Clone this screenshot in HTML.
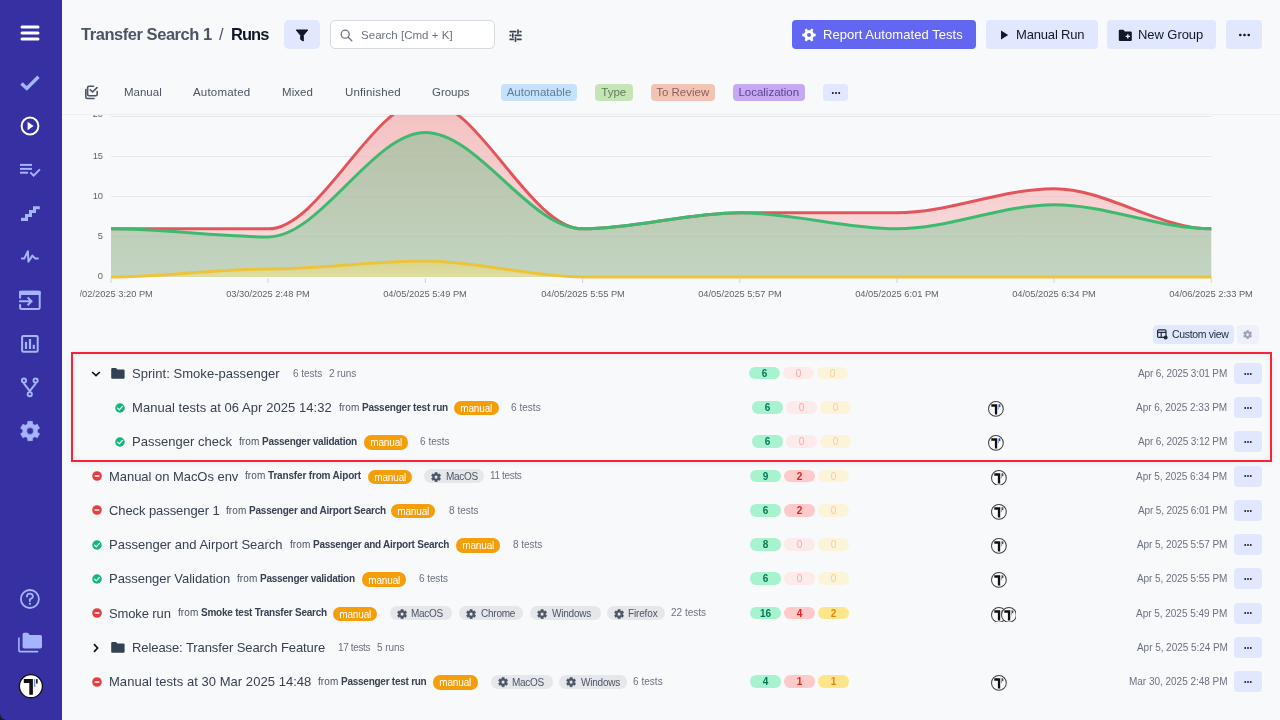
<!DOCTYPE html>
<html><head><meta charset="utf-8"><style>
html,body{margin:0;padding:0;}
body{width:1280px;height:720px;overflow:hidden;position:relative;background:#f8f9fb;font-family:"Liberation Sans", sans-serif;}
div[id^=t]{will-change:transform;}
.cl{will-change:transform;position:absolute;font-size:9.3px;line-height:14px;height:14px;color:#5f6368;white-space:nowrap;}
</style></head><body>
<div style="position:absolute;left:80px;top:0;width:1200px;height:320px;overflow:hidden">
<div style="position:absolute;left:-80px;top:0;width:1280px;height:320px">
<svg width="1280" height="720" style="position:absolute;left:0;top:0">
<defs>
<linearGradient id="gr" x1="0" y1="100" x2="0" y2="277.0" gradientUnits="userSpaceOnUse"><stop offset="0" stop-color="#ef4444" stop-opacity="0.32"/><stop offset="1" stop-color="#ef4444" stop-opacity="0.14"/></linearGradient>
<linearGradient id="gg" x1="0" y1="100" x2="0" y2="277.0" gradientUnits="userSpaceOnUse"><stop offset="0" stop-color="#3dba6f" stop-opacity="0.35"/><stop offset="1" stop-color="#3dba6f" stop-opacity="0.28"/></linearGradient>
<linearGradient id="gy" x1="0" y1="258" x2="0" y2="277.0" gradientUnits="userSpaceOnUse"><stop offset="0" stop-color="#f5d750" stop-opacity="0.42"/><stop offset="1" stop-color="#f5e68c" stop-opacity="0.55"/></linearGradient>
</defs>
<line x1="111.0" y1="276.5" x2="1211.26" y2="276.5" stroke="#e5e7eb" stroke-width="1"/><line x1="111.0" y1="236.5" x2="1211.26" y2="236.5" stroke="#e5e7eb" stroke-width="1"/><line x1="111.0" y1="196.5" x2="1211.26" y2="196.5" stroke="#e5e7eb" stroke-width="1"/><line x1="111.0" y1="156.5" x2="1211.26" y2="156.5" stroke="#e5e7eb" stroke-width="1"/><line x1="111.0" y1="116.5" x2="1211.26" y2="116.5" stroke="#e5e7eb" stroke-width="1"/><path d="M111.00,228.85 C163.39,228.85 215.79,228.85 268.18,228.85 C320.57,228.85 372.97,100.45 425.36,100.45 C477.75,100.45 530.15,228.85 582.54,228.85 C634.93,228.85 687.33,212.80 739.72,212.80 C792.11,212.80 844.51,212.80 896.90,212.80 C949.29,212.80 1001.69,188.72 1054.08,188.72 C1106.47,188.72 1158.87,228.85 1211.26,228.85 L1211.26,277.0 L111.0,277.0 Z" fill="#f8f9fb" fill-opacity="0.6"/><path d="M111.00,228.85 C163.39,228.85 215.79,228.85 268.18,228.85 C320.57,228.85 372.97,100.45 425.36,100.45 C477.75,100.45 530.15,228.85 582.54,228.85 C634.93,228.85 687.33,212.80 739.72,212.80 C792.11,212.80 844.51,212.80 896.90,212.80 C949.29,212.80 1001.69,188.72 1054.08,188.72 C1106.47,188.72 1158.87,228.85 1211.26,228.85 L1211.26,277.0 L111.0,277.0 Z" fill="url(#gr)"/><path d="M111.00,228.85 C163.39,228.85 215.79,236.88 268.18,236.88 C320.57,236.88 372.97,132.55 425.36,132.55 C477.75,132.55 530.15,228.85 582.54,228.85 C634.93,228.85 687.33,212.80 739.72,212.80 C792.11,212.80 844.51,228.85 896.90,228.85 C949.29,228.85 1001.69,204.77 1054.08,204.77 C1106.47,204.77 1158.87,228.85 1211.26,228.85 L1211.26,277.0 L111.0,277.0 Z" fill="url(#gg)"/><path d="M111.00,277.00 C163.39,277.00 215.79,268.98 268.18,268.98 C320.57,268.98 372.97,260.95 425.36,260.95 C477.75,260.95 530.15,277.00 582.54,277.00 C634.93,277.00 687.33,277.00 739.72,277.00 C792.11,277.00 844.51,277.00 896.90,277.00 C949.29,277.00 1001.69,277.00 1054.08,277.00 C1106.47,277.00 1158.87,277.00 1211.26,277.00 L1211.26,277.0 L111.0,277.0 Z" fill="url(#gy)"/><path d="M111.00,228.85 C163.39,228.85 215.79,228.85 268.18,228.85 C320.57,228.85 372.97,100.45 425.36,100.45 C477.75,100.45 530.15,228.85 582.54,228.85 C634.93,228.85 687.33,212.80 739.72,212.80 C792.11,212.80 844.51,212.80 896.90,212.80 C949.29,212.80 1001.69,188.72 1054.08,188.72 C1106.47,188.72 1158.87,228.85 1211.26,228.85" fill="none" stroke="#e3555a" stroke-width="3"/><path d="M111.00,228.85 C163.39,228.85 215.79,236.88 268.18,236.88 C320.57,236.88 372.97,132.55 425.36,132.55 C477.75,132.55 530.15,228.85 582.54,228.85 C634.93,228.85 687.33,212.80 739.72,212.80 C792.11,212.80 844.51,228.85 896.90,228.85 C949.29,228.85 1001.69,204.77 1054.08,204.77 C1106.47,204.77 1158.87,228.85 1211.26,228.85" fill="none" stroke="#3dba6f" stroke-width="3"/><path d="M111.00,277.00 C163.39,277.00 215.79,268.98 268.18,268.98 C320.57,268.98 372.97,260.95 425.36,260.95 C477.75,260.95 530.15,277.00 582.54,277.00 C634.93,277.00 687.33,277.00 739.72,277.00 C792.11,277.00 844.51,277.00 896.90,277.00 C949.29,277.00 1001.69,277.00 1054.08,277.00 C1106.47,277.00 1158.87,277.00 1211.26,277.00" fill="none" stroke="#ecc43c" stroke-width="3"/><line x1="111.0" y1="278.0" x2="111.0" y2="283.0" stroke="#d1d5db" stroke-width="1"/><line x1="268.18" y1="278.0" x2="268.18" y2="283.0" stroke="#d1d5db" stroke-width="1"/><line x1="425.36" y1="278.0" x2="425.36" y2="283.0" stroke="#d1d5db" stroke-width="1"/><line x1="582.54" y1="278.0" x2="582.54" y2="283.0" stroke="#d1d5db" stroke-width="1"/><line x1="739.72" y1="278.0" x2="739.72" y2="283.0" stroke="#d1d5db" stroke-width="1"/><line x1="896.9000000000001" y1="278.0" x2="896.9000000000001" y2="283.0" stroke="#d1d5db" stroke-width="1"/><line x1="1054.08" y1="278.0" x2="1054.08" y2="283.0" stroke="#d1d5db" stroke-width="1"/><line x1="1211.26" y1="278.0" x2="1211.26" y2="283.0" stroke="#d1d5db" stroke-width="1"/></svg>
<div class="cl" style="left:60px;width:43px;text-align:right;top:269.0px">0</div><div class="cl" style="left:60px;width:43px;text-align:right;top:228.9px">5</div><div class="cl" style="left:60px;width:43px;text-align:right;top:188.8px">10</div><div class="cl" style="left:60px;width:43px;text-align:right;top:148.6px">15</div><div class="cl" style="left:60px;width:43px;text-align:right;top:107.0px">20</div><div class="cl" style="left:51.0px;width:120px;text-align:center;top:286.5px">04/02/2025 3:20 PM</div><div class="cl" style="left:208.2px;width:120px;text-align:center;top:286.5px">03/30/2025 2:48 PM</div><div class="cl" style="left:365.4px;width:120px;text-align:center;top:286.5px">04/05/2025 5:49 PM</div><div class="cl" style="left:522.5px;width:120px;text-align:center;top:286.5px">04/05/2025 5:55 PM</div><div class="cl" style="left:679.7px;width:120px;text-align:center;top:286.5px">04/05/2025 5:57 PM</div><div class="cl" style="left:836.9px;width:120px;text-align:center;top:286.5px">04/05/2025 6:01 PM</div><div class="cl" style="left:994.1px;width:120px;text-align:center;top:286.5px">04/05/2025 6:34 PM</div><div class="cl" style="left:1151.3px;width:120px;text-align:center;top:286.5px">04/06/2025 2:33 PM</div>
</div></div>

<div style="position:absolute;left:62px;top:0;width:1218px;height:114px;background:#f8f9fb"></div>
<div style="position:absolute;left:62px;top:114px;width:1218px;height:1px;background:#eceef1"></div>
<div style="position:absolute;left:284.3px;top:20px;width:35.7px;height:29.2px;border-radius:5px;background:#e0e7ff"></div>
<svg style="position:absolute;left:295px;top:28.5px" width="14" height="13" viewBox="0 0 14 13"><path d="M1.2 1 H12.8 L8.3 6.4 V12 L5.7 10.4 V6.4 Z" fill="#111827" stroke="#111827" stroke-width="1" stroke-linejoin="round"/></svg>
<div style="position:absolute;left:329.5px;top:20px;width:165.5px;height:29.2px;box-sizing:border-box;border:1px solid #d6d9de;border-radius:5px;background:#fff"></div>
<svg style="position:absolute;left:340px;top:28.5px" width="13" height="13" viewBox="0 0 13 13"><circle cx="5.2" cy="5.2" r="4" fill="none" stroke="#6b7280" stroke-width="1.3"/><path d="M8.2 8.2 L11.8 11.8" stroke="#6b7280" stroke-width="1.3" stroke-linecap="round"/></svg>
<svg style="position:absolute;left:508px;top:29px" width="15" height="14" viewBox="0 0 15 14"><g stroke="#374151" stroke-width="1.7" stroke-linecap="round"><path d="M2.2 2.6 H7.6 M12.1 2.6 H12.9 M10 1 V4.3 M2.2 6.4 H2.6 M7.3 6.4 H12.9 M4.8 4.8 V8.1 M2.2 10.4 H5.1 M9.6 10.4 H12.9 M7.5 8.7 V12.2"/></g></svg>
<div style="position:absolute;left:792.1px;top:20px;width:183.9px;height:29.2px;border-radius:4px;background:#6366f1"></div>
<svg style="position:absolute;left:802px;top:27.5px" width="14" height="14" viewBox="0 0 14 14"><path fill-rule="evenodd" d="M11.79,5.58 L13.69,5.76 L13.69,8.24 L11.79,8.42 L10.63,10.44 L11.42,12.17 L9.27,13.41 L8.17,11.86 L5.83,11.86 L4.73,13.41 L2.58,12.17 L3.37,10.44 L2.21,8.42 L0.31,8.24 L0.31,5.76 L2.21,5.58 L3.37,3.56 L2.58,1.83 L4.73,0.59 L5.83,2.14 L8.17,2.14 L9.27,0.59 L11.42,1.83 L10.63,3.56 Z M9.00,7.00 A2.0,2.0 0 1 0 5.00,7.00 A2.0,2.0 0 1 0 9.00,7.00 Z" fill="#fff"/></svg>
<div style="position:absolute;left:985.5px;top:20px;width:112.5px;height:29.2px;border-radius:4px;background:#e0e7ff"></div>
<svg style="position:absolute;left:999.7px;top:29.8px" width="9" height="10" viewBox="0 0 9 10"><path d="M1 0.6 L8.2 5 L1 9.4 Z" fill="#111827"/></svg>
<div style="position:absolute;left:1107.3px;top:20px;width:109px;height:29.2px;border-radius:4px;background:#e0e7ff"></div>
<svg style="position:absolute;left:1118px;top:28.5px" width="15" height="13" viewBox="0 0 15 13"><path d="M0.8 1.8 Q0.8 0.8 1.8 0.8 H5.4 L6.9 2.4 H12.8 Q13.8 2.4 13.8 3.4 V11 Q13.8 12 12.8 12 H1.8 Q0.8 12 0.8 11 Z" fill="#111827"/><path d="M9.8 5.2 V9.6 M7.6 7.4 H12" stroke="#e0e7ff" stroke-width="1.4"/></svg>
<div style="position:absolute;left:1226px;top:20px;width:35.6px;height:29.2px;border-radius:4px;background:#e0e7ff"></div>
<svg style="position:absolute;left:1237.5px;top:32.5px" width="13" height="4" viewBox="0 0 13 4"><circle cx="2.3" cy="2" r="1.3" fill="#111"/><circle cx="6.5" cy="2" r="1.3" fill="#111"/><circle cx="10.7" cy="2" r="1.3" fill="#111"/></svg>
<svg style="position:absolute;left:83px;top:84px" width="17" height="17" viewBox="0 0 17 17"><g fill="none" stroke="#4b5563" stroke-width="1.6" stroke-linecap="round"><path d="M2.8 5.5 V13 Q2.8 14.5 4.3 14.5 H11"/><path d="M10.5 2.2 H6 Q4.6 2.2 4.6 3.6 V10.3 Q4.6 11.7 6 11.7 H12.8 Q14.2 11.7 14.2 10.3 V7.6"/><path d="M7.3 5.8 L9.6 8 L14 3.6"/></g></svg>
<div style="position:absolute;left:500.6px;top:84px;width:76px;height:16.5px;border-radius:4px;background:#c6e1fb"></div><div style="position:absolute;left:595px;top:84px;width:37.5px;height:16.5px;border-radius:4px;background:#c5e5b7"></div><div style="position:absolute;left:651px;top:84px;width:63.5px;height:16.5px;border-radius:4px;background:#f3c3b5"></div><div style="position:absolute;left:733px;top:84px;width:71.5px;height:16.5px;border-radius:4px;background:#c7a8f3"></div>
<div style="position:absolute;left:823px;top:84px;width:25px;height:16.5px;border-radius:4px;background:#e0e7ff"></div>
<svg style="position:absolute;left:830.5px;top:90.5px" width="10" height="4" viewBox="0 0 10 4"><circle cx="1.8" cy="2" r="1" fill="#111"/><circle cx="5" cy="2" r="1" fill="#111"/><circle cx="8.2" cy="2" r="1" fill="#111"/></svg>


<div style="position:absolute;left:1153.2px;top:324.6px;width:80.5px;height:19.1px;border-radius:4px;background:#e0e7ff"></div>
<svg style="position:absolute;left:1157px;top:329px" width="11" height="11" viewBox="0 0 11 11"><rect x="0.6" y="0.8" width="8.4" height="7.6" rx="1" fill="none" stroke="#1f2937" stroke-width="1.2"/><path d="M0.6 3.4 H9 M4.2 3.4 V8.4" stroke="#1f2937" stroke-width="1.2"/><circle cx="8.6" cy="8.6" r="2" fill="#1f2937"/></svg>
<div style="position:absolute;left:1237.2px;top:324.6px;width:21.5px;height:19.1px;border-radius:4px;background:#eef0fc"></div>
<svg style="position:absolute;left:1243.2px;top:329.6px" width="9.2" height="9.2" viewBox="0 0 9.2 9.2"><path fill-rule="evenodd" d="M3.51,1.57 L3.59,0.40 L5.61,0.40 L5.69,1.57 L6.68,2.14 L7.74,1.62 L8.75,3.37 L7.77,4.03 L7.77,5.17 L8.75,5.83 L7.74,7.58 L6.68,7.06 L5.69,7.63 L5.61,8.80 L3.59,8.80 L3.51,7.63 L2.52,7.06 L1.46,7.58 L0.45,5.83 L1.43,5.17 L1.43,4.03 L0.45,3.37 L1.46,1.62 L2.52,2.14 Z M6.16,4.60 A1.564,1.564 0 1 0 3.04,4.60 A1.564,1.564 0 1 0 6.16,4.60 Z" fill="#9ca3af" stroke="#9ca3af" stroke-width="0.46" stroke-linejoin="round"/></svg>
<div style="position:absolute;left:70.8px;top:352.3px;width:1201.4px;height:110px;box-sizing:border-box;border:2px solid #f9223a;box-shadow:0 1px 6px rgba(0,0,0,0.07), inset 0 2px 7px rgba(0,0,0,0.05)"></div>

<svg style="position:absolute;left:91.2px;top:370.1px" width="10" height="8" viewBox="0 0 10 8"><path d="M1.2 2 L5 5.6 L8.8 2" fill="none" stroke="#111" stroke-width="1.7"/></svg><svg style="position:absolute;left:111px;top:367.6px" width="14" height="11" viewBox="0 0 14 11"><path d="M1.2 0 H5 L6.4 1.6 H12.6 Q13.6 1.6 13.6 2.6 V9.8 Q13.6 10.8 12.6 10.8 H1.2 Q0.2 10.8 0.2 9.8 V1 Q0.2 0 1.2 0 Z" fill="#334155"/></svg><div style="position:absolute;left:749.2px;top:366.85px;width:31px;height:12.5px;border-radius:6.25px;background:#a7f3d0"></div><div style="position:absolute;left:783.3000000000001px;top:366.85px;width:31px;height:12.5px;border-radius:6.25px;background:#fdeaea"></div><div style="position:absolute;left:817.4000000000001px;top:366.85px;width:31px;height:12.5px;border-radius:6.25px;background:#fbf4d9"></div><div style="position:absolute;left:1233.5px;top:362.6px;width:28px;height:21px;border-radius:4px;background:#e0e7ff"></div><svg style="position:absolute;left:1242.7px;top:371.5px" width="10" height="4" viewBox="0 0 10 4"><circle cx="2.2" cy="2" r="0.9" fill="#111"/><circle cx="5" cy="2" r="0.9" fill="#111"/><circle cx="7.8" cy="2" r="0.9" fill="#111"/></svg><svg style="position:absolute;left:115.39999999999999px;top:402.8px" width="10" height="10" viewBox="0 0 10 10"><circle cx="5" cy="5" r="4.75" fill="#13b77d"/><path d="M2.5 5.1 L4.3 6.8 L7.4 3.4" fill="none" stroke="#e8f8f0" stroke-width="1.25" stroke-linecap="round" stroke-linejoin="round"/></svg><div style="position:absolute;left:454.4px;top:401.0px;width:44.3px;height:14.4px;border-radius:7.2px;background:#f59e0b"></div><div style="position:absolute;left:752.2px;top:401.05px;width:31px;height:12.5px;border-radius:6.25px;background:#a7f3d0"></div><div style="position:absolute;left:786.3000000000001px;top:401.05px;width:31px;height:12.5px;border-radius:6.25px;background:#fdeaea"></div><div style="position:absolute;left:820.4000000000001px;top:401.05px;width:31px;height:12.5px;border-radius:6.25px;background:#fbf4d9"></div><svg style="position:absolute;left:988.40px;top:400.80px" width="15.8" height="15.8" viewBox="-12.2 -12.2 24.4 24.4"><circle cx="0" cy="0" r="11.40" fill="#fff" stroke="#3f3f3f" stroke-width="1.6"/><path d="M-7.1,-7.1 H2 V8.5 H-1.6 V-3.2 H-7.1 Z" fill="#111"/><rect x="3" y="-7.1" width="1.35" height="7.7" fill="#5b8dfa"/><rect x="5.1" y="-7.1" width="1.7" height="4.4" fill="#222"/></svg><div style="position:absolute;left:1233.5px;top:396.8px;width:28px;height:21px;border-radius:4px;background:#e0e7ff"></div><svg style="position:absolute;left:1242.7px;top:405.7px" width="10" height="4" viewBox="0 0 10 4"><circle cx="2.2" cy="2" r="0.9" fill="#111"/><circle cx="5" cy="2" r="0.9" fill="#111"/><circle cx="7.8" cy="2" r="0.9" fill="#111"/></svg><svg style="position:absolute;left:115.39999999999999px;top:437.0px" width="10" height="10" viewBox="0 0 10 10"><circle cx="5" cy="5" r="4.75" fill="#13b77d"/><path d="M2.5 5.1 L4.3 6.8 L7.4 3.4" fill="none" stroke="#e8f8f0" stroke-width="1.25" stroke-linecap="round" stroke-linejoin="round"/></svg><div style="position:absolute;left:363.9px;top:435.2px;width:44.3px;height:14.4px;border-radius:7.2px;background:#f59e0b"></div><div style="position:absolute;left:752.2px;top:435.25px;width:31px;height:12.5px;border-radius:6.25px;background:#a7f3d0"></div><div style="position:absolute;left:786.3000000000001px;top:435.25px;width:31px;height:12.5px;border-radius:6.25px;background:#fdeaea"></div><div style="position:absolute;left:820.4000000000001px;top:435.25px;width:31px;height:12.5px;border-radius:6.25px;background:#fbf4d9"></div><svg style="position:absolute;left:988.40px;top:435.00px" width="15.8" height="15.8" viewBox="-12.2 -12.2 24.4 24.4"><circle cx="0" cy="0" r="11.40" fill="#fff" stroke="#3f3f3f" stroke-width="1.6"/><path d="M-7.1,-7.1 H2 V8.5 H-1.6 V-3.2 H-7.1 Z" fill="#111"/><rect x="3" y="-7.1" width="1.35" height="7.7" fill="#5b8dfa"/><rect x="5.1" y="-7.1" width="1.7" height="4.4" fill="#222"/></svg><div style="position:absolute;left:1233.5px;top:431.0px;width:28px;height:21px;border-radius:4px;background:#e0e7ff"></div><svg style="position:absolute;left:1242.7px;top:439.9px" width="10" height="4" viewBox="0 0 10 4"><circle cx="2.2" cy="2" r="0.9" fill="#111"/><circle cx="5" cy="2" r="0.9" fill="#111"/><circle cx="7.8" cy="2" r="0.9" fill="#111"/></svg><svg style="position:absolute;left:91.7px;top:471.0px" width="10" height="10" viewBox="0 0 10 10"><circle cx="5" cy="5" r="4.8" fill="#ea3c43"/><rect x="2.6" y="4.2" width="4.8" height="1.6" rx="0.4" fill="#fff"/></svg><div style="position:absolute;left:367.6px;top:469.7px;width:44.3px;height:14.4px;border-radius:7.2px;background:#f59e0b"></div><div style="position:absolute;left:424.2px;top:469.0px;width:59.6px;height:14px;border-radius:7px;background:#e5e7eb"></div><svg style="position:absolute;left:431.3px;top:471.9px" width="10.2" height="10.2" viewBox="0 0 10.2 10.2"><path fill-rule="evenodd" d="M3.89,1.74 L3.98,0.44 L6.22,0.44 L6.31,1.74 L7.40,2.37 L8.58,1.80 L9.70,3.74 L8.61,4.47 L8.61,5.73 L9.70,6.46 L8.58,8.40 L7.40,7.83 L6.31,8.46 L6.22,9.76 L3.98,9.76 L3.89,8.46 L2.80,7.83 L1.62,8.40 L0.50,6.46 L1.59,5.73 L1.59,4.47 L0.50,3.74 L1.62,1.80 L2.80,2.37 Z M6.83,5.10 A1.734,1.734 0 1 0 3.37,5.10 A1.734,1.734 0 1 0 6.83,5.10 Z" fill="#4b5563" stroke="#4b5563" stroke-width="0.51" stroke-linejoin="round"/></svg><div style="position:absolute;left:749.7px;top:469.75px;width:31px;height:12.5px;border-radius:6.25px;background:#a7f3d0"></div><div style="position:absolute;left:783.8000000000001px;top:469.75px;width:31px;height:12.5px;border-radius:6.25px;background:#fecaca"></div><div style="position:absolute;left:817.9000000000001px;top:469.75px;width:31px;height:12.5px;border-radius:6.25px;background:#fbf4d9"></div><svg style="position:absolute;left:990.90px;top:469.50px" width="15.8" height="15.8" viewBox="-12.2 -12.2 24.4 24.4"><circle cx="0" cy="0" r="11.40" fill="#fff" stroke="#3f3f3f" stroke-width="1.6"/><path d="M-7.1,-7.1 H2 V8.5 H-1.6 V-3.2 H-7.1 Z" fill="#111"/><rect x="3" y="-7.1" width="1.35" height="7.7" fill="#5b8dfa"/><rect x="5.1" y="-7.1" width="1.7" height="4.4" fill="#222"/></svg><div style="position:absolute;left:1233.5px;top:465.5px;width:28px;height:21px;border-radius:4px;background:#e0e7ff"></div><svg style="position:absolute;left:1242.7px;top:474.4px" width="10" height="4" viewBox="0 0 10 4"><circle cx="2.2" cy="2" r="0.9" fill="#111"/><circle cx="5" cy="2" r="0.9" fill="#111"/><circle cx="7.8" cy="2" r="0.9" fill="#111"/></svg><svg style="position:absolute;left:91.7px;top:505.3px" width="10" height="10" viewBox="0 0 10 10"><circle cx="5" cy="5" r="4.8" fill="#ea3c43"/><rect x="2.6" y="4.2" width="4.8" height="1.6" rx="0.4" fill="#fff"/></svg><div style="position:absolute;left:391.2px;top:504.0px;width:44.3px;height:14.4px;border-radius:7.2px;background:#f59e0b"></div><div style="position:absolute;left:749.7px;top:504.05px;width:31px;height:12.5px;border-radius:6.25px;background:#a7f3d0"></div><div style="position:absolute;left:783.8000000000001px;top:504.05px;width:31px;height:12.5px;border-radius:6.25px;background:#fecaca"></div><div style="position:absolute;left:817.9000000000001px;top:504.05px;width:31px;height:12.5px;border-radius:6.25px;background:#fbf4d9"></div><svg style="position:absolute;left:990.90px;top:503.80px" width="15.8" height="15.8" viewBox="-12.2 -12.2 24.4 24.4"><circle cx="0" cy="0" r="11.40" fill="#fff" stroke="#3f3f3f" stroke-width="1.6"/><path d="M-7.1,-7.1 H2 V8.5 H-1.6 V-3.2 H-7.1 Z" fill="#111"/><rect x="3" y="-7.1" width="1.35" height="7.7" fill="#5b8dfa"/><rect x="5.1" y="-7.1" width="1.7" height="4.4" fill="#222"/></svg><div style="position:absolute;left:1233.5px;top:499.8px;width:28px;height:21px;border-radius:4px;background:#e0e7ff"></div><svg style="position:absolute;left:1242.7px;top:508.7px" width="10" height="4" viewBox="0 0 10 4"><circle cx="2.2" cy="2" r="0.9" fill="#111"/><circle cx="5" cy="2" r="0.9" fill="#111"/><circle cx="7.8" cy="2" r="0.9" fill="#111"/></svg><svg style="position:absolute;left:91.8px;top:540.0px" width="10" height="10" viewBox="0 0 10 10"><circle cx="5" cy="5" r="4.75" fill="#13b77d"/><path d="M2.5 5.1 L4.3 6.8 L7.4 3.4" fill="none" stroke="#e8f8f0" stroke-width="1.25" stroke-linecap="round" stroke-linejoin="round"/></svg><div style="position:absolute;left:456px;top:538.1999999999999px;width:44.3px;height:14.4px;border-radius:7.2px;background:#f59e0b"></div><div style="position:absolute;left:749.7px;top:538.25px;width:31px;height:12.5px;border-radius:6.25px;background:#a7f3d0"></div><div style="position:absolute;left:783.8000000000001px;top:538.25px;width:31px;height:12.5px;border-radius:6.25px;background:#fdeaea"></div><div style="position:absolute;left:817.9000000000001px;top:538.25px;width:31px;height:12.5px;border-radius:6.25px;background:#fbf4d9"></div><svg style="position:absolute;left:990.90px;top:538.00px" width="15.8" height="15.8" viewBox="-12.2 -12.2 24.4 24.4"><circle cx="0" cy="0" r="11.40" fill="#fff" stroke="#3f3f3f" stroke-width="1.6"/><path d="M-7.1,-7.1 H2 V8.5 H-1.6 V-3.2 H-7.1 Z" fill="#111"/><rect x="3" y="-7.1" width="1.35" height="7.7" fill="#5b8dfa"/><rect x="5.1" y="-7.1" width="1.7" height="4.4" fill="#222"/></svg><div style="position:absolute;left:1233.5px;top:534.0px;width:28px;height:21px;border-radius:4px;background:#e0e7ff"></div><svg style="position:absolute;left:1242.7px;top:542.9px" width="10" height="4" viewBox="0 0 10 4"><circle cx="2.2" cy="2" r="0.9" fill="#111"/><circle cx="5" cy="2" r="0.9" fill="#111"/><circle cx="7.8" cy="2" r="0.9" fill="#111"/></svg><svg style="position:absolute;left:91.8px;top:574.2px" width="10" height="10" viewBox="0 0 10 10"><circle cx="5" cy="5" r="4.75" fill="#13b77d"/><path d="M2.5 5.1 L4.3 6.8 L7.4 3.4" fill="none" stroke="#e8f8f0" stroke-width="1.25" stroke-linecap="round" stroke-linejoin="round"/></svg><div style="position:absolute;left:362px;top:572.4px;width:44.3px;height:14.4px;border-radius:7.2px;background:#f59e0b"></div><div style="position:absolute;left:749.7px;top:572.45px;width:31px;height:12.5px;border-radius:6.25px;background:#a7f3d0"></div><div style="position:absolute;left:783.8000000000001px;top:572.45px;width:31px;height:12.5px;border-radius:6.25px;background:#fdeaea"></div><div style="position:absolute;left:817.9000000000001px;top:572.45px;width:31px;height:12.5px;border-radius:6.25px;background:#fbf4d9"></div><svg style="position:absolute;left:990.90px;top:572.20px" width="15.8" height="15.8" viewBox="-12.2 -12.2 24.4 24.4"><circle cx="0" cy="0" r="11.40" fill="#fff" stroke="#3f3f3f" stroke-width="1.6"/><path d="M-7.1,-7.1 H2 V8.5 H-1.6 V-3.2 H-7.1 Z" fill="#111"/><rect x="3" y="-7.1" width="1.35" height="7.7" fill="#5b8dfa"/><rect x="5.1" y="-7.1" width="1.7" height="4.4" fill="#222"/></svg><div style="position:absolute;left:1233.5px;top:568.2px;width:28px;height:21px;border-radius:4px;background:#e0e7ff"></div><svg style="position:absolute;left:1242.7px;top:577.1px" width="10" height="4" viewBox="0 0 10 4"><circle cx="2.2" cy="2" r="0.9" fill="#111"/><circle cx="5" cy="2" r="0.9" fill="#111"/><circle cx="7.8" cy="2" r="0.9" fill="#111"/></svg><svg style="position:absolute;left:91.7px;top:608.0px" width="10" height="10" viewBox="0 0 10 10"><circle cx="5" cy="5" r="4.8" fill="#ea3c43"/><rect x="2.6" y="4.2" width="4.8" height="1.6" rx="0.4" fill="#fff"/></svg><div style="position:absolute;left:333.1px;top:606.6999999999999px;width:44.3px;height:14.4px;border-radius:7.2px;background:#f59e0b"></div><div style="position:absolute;left:389.7px;top:606.0px;width:62.5px;height:14px;border-radius:7px;background:#e5e7eb"></div><svg style="position:absolute;left:396.8px;top:608.9px" width="10.2" height="10.2" viewBox="0 0 10.2 10.2"><path fill-rule="evenodd" d="M3.89,1.74 L3.98,0.44 L6.22,0.44 L6.31,1.74 L7.40,2.37 L8.58,1.80 L9.70,3.74 L8.61,4.47 L8.61,5.73 L9.70,6.46 L8.58,8.40 L7.40,7.83 L6.31,8.46 L6.22,9.76 L3.98,9.76 L3.89,8.46 L2.80,7.83 L1.62,8.40 L0.50,6.46 L1.59,5.73 L1.59,4.47 L0.50,3.74 L1.62,1.80 L2.80,2.37 Z M6.83,5.10 A1.734,1.734 0 1 0 3.37,5.10 A1.734,1.734 0 1 0 6.83,5.10 Z" fill="#4b5563" stroke="#4b5563" stroke-width="0.51" stroke-linejoin="round"/></svg><div style="position:absolute;left:459px;top:606.0px;width:64.4px;height:14px;border-radius:7px;background:#e5e7eb"></div><svg style="position:absolute;left:466.1px;top:608.9px" width="10.2" height="10.2" viewBox="0 0 10.2 10.2"><path fill-rule="evenodd" d="M3.89,1.74 L3.98,0.44 L6.22,0.44 L6.31,1.74 L7.40,2.37 L8.58,1.80 L9.70,3.74 L8.61,4.47 L8.61,5.73 L9.70,6.46 L8.58,8.40 L7.40,7.83 L6.31,8.46 L6.22,9.76 L3.98,9.76 L3.89,8.46 L2.80,7.83 L1.62,8.40 L0.50,6.46 L1.59,5.73 L1.59,4.47 L0.50,3.74 L1.62,1.80 L2.80,2.37 Z M6.83,5.10 A1.734,1.734 0 1 0 3.37,5.10 A1.734,1.734 0 1 0 6.83,5.10 Z" fill="#4b5563" stroke="#4b5563" stroke-width="0.51" stroke-linejoin="round"/></svg><div style="position:absolute;left:530.3px;top:606.0px;width:70.3px;height:14px;border-radius:7px;background:#e5e7eb"></div><svg style="position:absolute;left:537.4px;top:608.9px" width="10.2" height="10.2" viewBox="0 0 10.2 10.2"><path fill-rule="evenodd" d="M3.89,1.74 L3.98,0.44 L6.22,0.44 L6.31,1.74 L7.40,2.37 L8.58,1.80 L9.70,3.74 L8.61,4.47 L8.61,5.73 L9.70,6.46 L8.58,8.40 L7.40,7.83 L6.31,8.46 L6.22,9.76 L3.98,9.76 L3.89,8.46 L2.80,7.83 L1.62,8.40 L0.50,6.46 L1.59,5.73 L1.59,4.47 L0.50,3.74 L1.62,1.80 L2.80,2.37 Z M6.83,5.10 A1.734,1.734 0 1 0 3.37,5.10 A1.734,1.734 0 1 0 6.83,5.10 Z" fill="#4b5563" stroke="#4b5563" stroke-width="0.51" stroke-linejoin="round"/></svg><div style="position:absolute;left:606.9px;top:606.0px;width:57.8px;height:14px;border-radius:7px;background:#e5e7eb"></div><svg style="position:absolute;left:614.0px;top:608.9px" width="10.2" height="10.2" viewBox="0 0 10.2 10.2"><path fill-rule="evenodd" d="M3.89,1.74 L3.98,0.44 L6.22,0.44 L6.31,1.74 L7.40,2.37 L8.58,1.80 L9.70,3.74 L8.61,4.47 L8.61,5.73 L9.70,6.46 L8.58,8.40 L7.40,7.83 L6.31,8.46 L6.22,9.76 L3.98,9.76 L3.89,8.46 L2.80,7.83 L1.62,8.40 L0.50,6.46 L1.59,5.73 L1.59,4.47 L0.50,3.74 L1.62,1.80 L2.80,2.37 Z M6.83,5.10 A1.734,1.734 0 1 0 3.37,5.10 A1.734,1.734 0 1 0 6.83,5.10 Z" fill="#4b5563" stroke="#4b5563" stroke-width="0.51" stroke-linejoin="round"/></svg><div style="position:absolute;left:749.7px;top:606.75px;width:31px;height:12.5px;border-radius:6.25px;background:#a7f3d0"></div><div style="position:absolute;left:783.8000000000001px;top:606.75px;width:31px;height:12.5px;border-radius:6.25px;background:#fecaca"></div><div style="position:absolute;left:817.9000000000001px;top:606.75px;width:31px;height:12.5px;border-radius:6.25px;background:#fde68a"></div><svg style="position:absolute;left:990.70px;top:606.50px" width="15.8" height="15.8" viewBox="-12.2 -12.2 24.4 24.4"><circle cx="0" cy="0" r="11.40" fill="#fff" stroke="#3f3f3f" stroke-width="1.6"/><path d="M-7.1,-7.1 H2 V8.5 H-1.6 V-3.2 H-7.1 Z" fill="#111"/><rect x="3" y="-7.1" width="1.35" height="7.7" fill="#5b8dfa"/><rect x="5.1" y="-7.1" width="1.7" height="4.4" fill="#222"/></svg><svg style="position:absolute;left:1000.70px;top:606.50px" width="15.8" height="15.8" viewBox="-12.2 -12.2 24.4 24.4"><circle cx="0" cy="0" r="11.40" fill="#fff" stroke="#3f3f3f" stroke-width="1.6"/><path d="M-7.1,-7.1 H2 V8.5 H-1.6 V-3.2 H-7.1 Z" fill="#111"/><rect x="3" y="-7.1" width="1.35" height="7.7" fill="#5b8dfa"/><rect x="5.1" y="-7.1" width="1.7" height="4.4" fill="#222"/></svg><div style="position:absolute;left:1233.5px;top:602.5px;width:28px;height:21px;border-radius:4px;background:#e0e7ff"></div><svg style="position:absolute;left:1242.7px;top:611.4px" width="10" height="4" viewBox="0 0 10 4"><circle cx="2.2" cy="2" r="0.9" fill="#111"/><circle cx="5" cy="2" r="0.9" fill="#111"/><circle cx="7.8" cy="2" r="0.9" fill="#111"/></svg><svg style="position:absolute;left:92.4px;top:642.8000000000001px" width="8" height="10" viewBox="0 0 8 10"><path d="M2 1.2 L5.6 5 L2 8.8" fill="none" stroke="#111" stroke-width="1.7"/></svg><svg style="position:absolute;left:111px;top:641.7px" width="14" height="11" viewBox="0 0 14 11"><path d="M1.2 0 H5 L6.4 1.6 H12.6 Q13.6 1.6 13.6 2.6 V9.8 Q13.6 10.8 12.6 10.8 H1.2 Q0.2 10.8 0.2 9.8 V1 Q0.2 0 1.2 0 Z" fill="#334155"/></svg><div style="position:absolute;left:1233.5px;top:636.7px;width:28px;height:21px;border-radius:4px;background:#e0e7ff"></div><svg style="position:absolute;left:1242.7px;top:645.6px" width="10" height="4" viewBox="0 0 10 4"><circle cx="2.2" cy="2" r="0.9" fill="#111"/><circle cx="5" cy="2" r="0.9" fill="#111"/><circle cx="7.8" cy="2" r="0.9" fill="#111"/></svg><svg style="position:absolute;left:91.7px;top:676.5px" width="10" height="10" viewBox="0 0 10 10"><circle cx="5" cy="5" r="4.8" fill="#ea3c43"/><rect x="2.6" y="4.2" width="4.8" height="1.6" rx="0.4" fill="#fff"/></svg><div style="position:absolute;left:433.4px;top:675.1999999999999px;width:44.3px;height:14.4px;border-radius:7.2px;background:#f59e0b"></div><div style="position:absolute;left:490.6px;top:674.5px;width:62.2px;height:14px;border-radius:7px;background:#e5e7eb"></div><svg style="position:absolute;left:497.70000000000005px;top:677.4px" width="10.2" height="10.2" viewBox="0 0 10.2 10.2"><path fill-rule="evenodd" d="M3.89,1.74 L3.98,0.44 L6.22,0.44 L6.31,1.74 L7.40,2.37 L8.58,1.80 L9.70,3.74 L8.61,4.47 L8.61,5.73 L9.70,6.46 L8.58,8.40 L7.40,7.83 L6.31,8.46 L6.22,9.76 L3.98,9.76 L3.89,8.46 L2.80,7.83 L1.62,8.40 L0.50,6.46 L1.59,5.73 L1.59,4.47 L0.50,3.74 L1.62,1.80 L2.80,2.37 Z M6.83,5.10 A1.734,1.734 0 1 0 3.37,5.10 A1.734,1.734 0 1 0 6.83,5.10 Z" fill="#4b5563" stroke="#4b5563" stroke-width="0.51" stroke-linejoin="round"/></svg><div style="position:absolute;left:559px;top:674.5px;width:68.2px;height:14px;border-radius:7px;background:#e5e7eb"></div><svg style="position:absolute;left:566.1px;top:677.4px" width="10.2" height="10.2" viewBox="0 0 10.2 10.2"><path fill-rule="evenodd" d="M3.89,1.74 L3.98,0.44 L6.22,0.44 L6.31,1.74 L7.40,2.37 L8.58,1.80 L9.70,3.74 L8.61,4.47 L8.61,5.73 L9.70,6.46 L8.58,8.40 L7.40,7.83 L6.31,8.46 L6.22,9.76 L3.98,9.76 L3.89,8.46 L2.80,7.83 L1.62,8.40 L0.50,6.46 L1.59,5.73 L1.59,4.47 L0.50,3.74 L1.62,1.80 L2.80,2.37 Z M6.83,5.10 A1.734,1.734 0 1 0 3.37,5.10 A1.734,1.734 0 1 0 6.83,5.10 Z" fill="#4b5563" stroke="#4b5563" stroke-width="0.51" stroke-linejoin="round"/></svg><div style="position:absolute;left:749.7px;top:675.25px;width:31px;height:12.5px;border-radius:6.25px;background:#a7f3d0"></div><div style="position:absolute;left:783.8000000000001px;top:675.25px;width:31px;height:12.5px;border-radius:6.25px;background:#fecaca"></div><div style="position:absolute;left:817.9000000000001px;top:675.25px;width:31px;height:12.5px;border-radius:6.25px;background:#fde68a"></div><svg style="position:absolute;left:990.90px;top:675.00px" width="15.8" height="15.8" viewBox="-12.2 -12.2 24.4 24.4"><circle cx="0" cy="0" r="11.40" fill="#fff" stroke="#3f3f3f" stroke-width="1.6"/><path d="M-7.1,-7.1 H2 V8.5 H-1.6 V-3.2 H-7.1 Z" fill="#111"/><rect x="3" y="-7.1" width="1.35" height="7.7" fill="#5b8dfa"/><rect x="5.1" y="-7.1" width="1.7" height="4.4" fill="#222"/></svg><div style="position:absolute;left:1233.5px;top:671.0px;width:28px;height:21px;border-radius:4px;background:#e0e7ff"></div><svg style="position:absolute;left:1242.7px;top:679.9px" width="10" height="4" viewBox="0 0 10 4"><circle cx="2.2" cy="2" r="0.9" fill="#111"/><circle cx="5" cy="2" r="0.9" fill="#111"/><circle cx="7.8" cy="2" r="0.9" fill="#111"/></svg>
<div id="t0" style="position:absolute;left:132.2px;top:364.70px;height:18px;line-height:18px;font-size:13px;font-weight:400;color:#374151;white-space:nowrap;letter-spacing:0.040px;">Sprint: Smoke-passenger</div><div id="t1" style="position:absolute;left:292.7px;top:366.54px;height:14px;line-height:14px;font-size:10px;font-weight:400;color:#6b7280;white-space:nowrap;letter-spacing:-0.024px;">6 tests</div><div id="t2" style="position:absolute;left:329px;top:366.54px;height:14px;line-height:14px;font-size:10px;font-weight:400;color:#6b7280;white-space:nowrap;letter-spacing:-0.133px;">2 runs</div><div id="t3" style="position:absolute;left:749.2px;top:367.85px;height:12.5px;line-height:12.5px;font-size:10px;font-weight:700;color:#047857;white-space:nowrap;letter-spacing:0.000px;width:31px;text-align:center;text-indent:0px;letter-spacing:0px;">6</div><div id="t4" style="position:absolute;left:783.3000000000001px;top:367.85px;height:12.5px;line-height:12.5px;font-size:10px;font-weight:400;color:#f6a9a9;white-space:nowrap;letter-spacing:0.000px;width:31px;text-align:center;text-indent:0px;letter-spacing:0px;">0</div><div id="t5" style="position:absolute;left:817.4000000000001px;top:367.85px;height:12.5px;line-height:12.5px;font-size:10px;font-weight:400;color:#f8c9a0;white-space:nowrap;letter-spacing:0.000px;width:31px;text-align:center;text-indent:0px;letter-spacing:0px;">0</div><div id="t6" style="position:absolute;left:1138.2px;top:366.74px;height:14px;line-height:14px;font-size:10px;font-weight:400;color:#6b7280;white-space:nowrap;letter-spacing:-0.139px;">Apr 6, 2025 3:01 PM</div><div id="t7" style="position:absolute;left:132.2px;top:398.90px;height:18px;line-height:18px;font-size:13px;font-weight:400;color:#374151;white-space:nowrap;letter-spacing:0.051px;">Manual tests at 06 Apr 2025 14:32</div><div id="t8" style="position:absolute;left:338.6px;top:400.74px;height:14px;line-height:14px;font-size:10px;font-weight:400;color:#4b5563;white-space:nowrap;letter-spacing:0.075px;">from</div><div id="t9" style="position:absolute;left:362px;top:400.74px;height:14px;line-height:14px;font-size:10px;font-weight:700;color:#374151;white-space:nowrap;letter-spacing:-0.225px;">Passenger test run</div><div id="t10" style="position:absolute;left:454.4px;top:402.20px;height:14.4px;line-height:14.4px;font-size:10px;font-weight:400;color:#fff;white-space:nowrap;letter-spacing:0.000px;width:44.3px;text-align:center;text-indent:0.15px;letter-spacing:-0.15px;">manual</div><div id="t11" style="position:absolute;left:511px;top:400.74px;height:14px;line-height:14px;font-size:10px;font-weight:400;color:#6b7280;white-space:nowrap;letter-spacing:0.033px;">6 tests</div><div id="t12" style="position:absolute;left:752.2px;top:402.05px;height:12.5px;line-height:12.5px;font-size:10px;font-weight:700;color:#047857;white-space:nowrap;letter-spacing:0.000px;width:31px;text-align:center;text-indent:0px;letter-spacing:0px;">6</div><div id="t13" style="position:absolute;left:786.3000000000001px;top:402.05px;height:12.5px;line-height:12.5px;font-size:10px;font-weight:400;color:#f6a9a9;white-space:nowrap;letter-spacing:0.000px;width:31px;text-align:center;text-indent:0px;letter-spacing:0px;">0</div><div id="t14" style="position:absolute;left:820.4000000000001px;top:402.05px;height:12.5px;line-height:12.5px;font-size:10px;font-weight:400;color:#f8c9a0;white-space:nowrap;letter-spacing:0.000px;width:31px;text-align:center;text-indent:0px;letter-spacing:0px;">0</div><div id="t15" style="position:absolute;left:1136.2px;top:400.94px;height:14px;line-height:14px;font-size:10px;font-weight:400;color:#6b7280;white-space:nowrap;letter-spacing:-0.033px;">Apr 6, 2025 2:33 PM</div><div id="t16" style="position:absolute;left:132.2px;top:433.10px;height:18px;line-height:18px;font-size:13px;font-weight:400;color:#374151;white-space:nowrap;letter-spacing:0.024px;">Passenger check</div><div id="t17" style="position:absolute;left:238.5px;top:434.94px;height:14px;line-height:14px;font-size:10px;font-weight:400;color:#4b5563;white-space:nowrap;letter-spacing:0.075px;">from</div><div id="t18" style="position:absolute;left:262px;top:434.94px;height:14px;line-height:14px;font-size:10px;font-weight:700;color:#374151;white-space:nowrap;letter-spacing:-0.257px;">Passenger validation</div><div id="t19" style="position:absolute;left:363.9px;top:436.40px;height:14.4px;line-height:14.4px;font-size:10px;font-weight:400;color:#fff;white-space:nowrap;letter-spacing:0.000px;width:44.3px;text-align:center;text-indent:0.15px;letter-spacing:-0.15px;">manual</div><div id="t20" style="position:absolute;left:420.2px;top:434.94px;height:14px;line-height:14px;font-size:10px;font-weight:400;color:#6b7280;white-space:nowrap;letter-spacing:0.019px;">6 tests</div><div id="t21" style="position:absolute;left:752.2px;top:436.25px;height:12.5px;line-height:12.5px;font-size:10px;font-weight:700;color:#047857;white-space:nowrap;letter-spacing:0.000px;width:31px;text-align:center;text-indent:0px;letter-spacing:0px;">6</div><div id="t22" style="position:absolute;left:786.3000000000001px;top:436.25px;height:12.5px;line-height:12.5px;font-size:10px;font-weight:400;color:#f6a9a9;white-space:nowrap;letter-spacing:0.000px;width:31px;text-align:center;text-indent:0px;letter-spacing:0px;">0</div><div id="t23" style="position:absolute;left:820.4000000000001px;top:436.25px;height:12.5px;line-height:12.5px;font-size:10px;font-weight:400;color:#f8c9a0;white-space:nowrap;letter-spacing:0.000px;width:31px;text-align:center;text-indent:0px;letter-spacing:0px;">0</div><div id="t24" style="position:absolute;left:1138.2px;top:435.14px;height:14px;line-height:14px;font-size:10px;font-weight:400;color:#6b7280;white-space:nowrap;letter-spacing:-0.139px;">Apr 6, 2025 3:12 PM</div><div id="t25" style="position:absolute;left:108.9px;top:467.60px;height:18px;line-height:18px;font-size:13px;font-weight:400;color:#374151;white-space:nowrap;letter-spacing:-0.041px;">Manual on MacOs env</div><div id="t26" style="position:absolute;left:245px;top:469.44px;height:14px;line-height:14px;font-size:10px;font-weight:400;color:#4b5563;white-space:nowrap;letter-spacing:0.075px;">from</div><div id="t27" style="position:absolute;left:268.2px;top:469.44px;height:14px;line-height:14px;font-size:10px;font-weight:700;color:#374151;white-space:nowrap;letter-spacing:-0.166px;">Transfer from Aiport</div><div id="t28" style="position:absolute;left:367.6px;top:470.90px;height:14.4px;line-height:14.4px;font-size:10px;font-weight:400;color:#fff;white-space:nowrap;letter-spacing:0.000px;width:44.3px;text-align:center;text-indent:0.15px;letter-spacing:-0.15px;">manual</div><div id="t29" style="position:absolute;left:445.7px;top:470.04px;height:14px;line-height:14px;font-size:10px;font-weight:400;color:#4b5563;white-space:nowrap;letter-spacing:-0.309px;">MacOS</div><div id="t30" style="position:absolute;left:489.8px;top:469.44px;height:14px;line-height:14px;font-size:10px;font-weight:400;color:#6b7280;white-space:nowrap;letter-spacing:-0.348px;">11 tests</div><div id="t31" style="position:absolute;left:749.7px;top:470.75px;height:12.5px;line-height:12.5px;font-size:10px;font-weight:700;color:#047857;white-space:nowrap;letter-spacing:0.000px;width:31px;text-align:center;text-indent:0px;letter-spacing:0px;">9</div><div id="t32" style="position:absolute;left:783.8000000000001px;top:470.75px;height:12.5px;line-height:12.5px;font-size:10px;font-weight:700;color:#dc2626;white-space:nowrap;letter-spacing:0.000px;width:31px;text-align:center;text-indent:0px;letter-spacing:0px;">2</div><div id="t33" style="position:absolute;left:817.9000000000001px;top:470.75px;height:12.5px;line-height:12.5px;font-size:10px;font-weight:400;color:#f8c9a0;white-space:nowrap;letter-spacing:0.000px;width:31px;text-align:center;text-indent:0px;letter-spacing:0px;">0</div><div id="t34" style="position:absolute;left:1136.2px;top:469.64px;height:14px;line-height:14px;font-size:10px;font-weight:400;color:#6b7280;white-space:nowrap;letter-spacing:-0.033px;">Apr 5, 2025 6:34 PM</div><div id="t35" style="position:absolute;left:108.9px;top:501.90px;height:18px;line-height:18px;font-size:13px;font-weight:400;color:#374151;white-space:nowrap;letter-spacing:-0.083px;">Check passenger 1</div><div id="t36" style="position:absolute;left:225.5px;top:503.74px;height:14px;line-height:14px;font-size:10px;font-weight:400;color:#4b5563;white-space:nowrap;letter-spacing:0.075px;">from</div><div id="t37" style="position:absolute;left:248.7px;top:503.74px;height:14px;line-height:14px;font-size:10px;font-weight:700;color:#374151;white-space:nowrap;letter-spacing:-0.218px;">Passenger and Airport Search</div><div id="t38" style="position:absolute;left:391.2px;top:505.20px;height:14.4px;line-height:14.4px;font-size:10px;font-weight:400;color:#fff;white-space:nowrap;letter-spacing:0.000px;width:44.3px;text-align:center;text-indent:0.15px;letter-spacing:-0.15px;">manual</div><div id="t39" style="position:absolute;left:448.6px;top:503.74px;height:14px;line-height:14px;font-size:10px;font-weight:400;color:#6b7280;white-space:nowrap;letter-spacing:0.019px;">8 tests</div><div id="t40" style="position:absolute;left:749.7px;top:505.05px;height:12.5px;line-height:12.5px;font-size:10px;font-weight:700;color:#047857;white-space:nowrap;letter-spacing:0.000px;width:31px;text-align:center;text-indent:0px;letter-spacing:0px;">6</div><div id="t41" style="position:absolute;left:783.8000000000001px;top:505.05px;height:12.5px;line-height:12.5px;font-size:10px;font-weight:700;color:#dc2626;white-space:nowrap;letter-spacing:0.000px;width:31px;text-align:center;text-indent:0px;letter-spacing:0px;">2</div><div id="t42" style="position:absolute;left:817.9000000000001px;top:505.05px;height:12.5px;line-height:12.5px;font-size:10px;font-weight:400;color:#f8c9a0;white-space:nowrap;letter-spacing:0.000px;width:31px;text-align:center;text-indent:0px;letter-spacing:0px;">0</div><div id="t43" style="position:absolute;left:1138.2px;top:503.94px;height:14px;line-height:14px;font-size:10px;font-weight:400;color:#6b7280;white-space:nowrap;letter-spacing:-0.139px;">Apr 5, 2025 6:01 PM</div><div id="t44" style="position:absolute;left:108.9px;top:536.10px;height:18px;line-height:18px;font-size:13px;font-weight:400;color:#374151;white-space:nowrap;letter-spacing:0.006px;">Passenger and Airport Search</div><div id="t45" style="position:absolute;left:290px;top:537.93px;height:14px;line-height:14px;font-size:10px;font-weight:400;color:#4b5563;white-space:nowrap;letter-spacing:0.075px;">from</div><div id="t46" style="position:absolute;left:313.2px;top:537.93px;height:14px;line-height:14px;font-size:10px;font-weight:700;color:#374151;white-space:nowrap;letter-spacing:-0.247px;">Passenger and Airport Search</div><div id="t47" style="position:absolute;left:456px;top:539.40px;height:14.4px;line-height:14.4px;font-size:10px;font-weight:400;color:#fff;white-space:nowrap;letter-spacing:0.000px;width:44.3px;text-align:center;text-indent:0.15px;letter-spacing:-0.15px;">manual</div><div id="t48" style="position:absolute;left:513px;top:537.93px;height:14px;line-height:14px;font-size:10px;font-weight:400;color:#6b7280;white-space:nowrap;letter-spacing:-0.024px;">8 tests</div><div id="t49" style="position:absolute;left:749.7px;top:539.25px;height:12.5px;line-height:12.5px;font-size:10px;font-weight:700;color:#047857;white-space:nowrap;letter-spacing:0.000px;width:31px;text-align:center;text-indent:0px;letter-spacing:0px;">8</div><div id="t50" style="position:absolute;left:783.8000000000001px;top:539.25px;height:12.5px;line-height:12.5px;font-size:10px;font-weight:400;color:#f6a9a9;white-space:nowrap;letter-spacing:0.000px;width:31px;text-align:center;text-indent:0px;letter-spacing:0px;">0</div><div id="t51" style="position:absolute;left:817.9000000000001px;top:539.25px;height:12.5px;line-height:12.5px;font-size:10px;font-weight:400;color:#f8c9a0;white-space:nowrap;letter-spacing:0.000px;width:31px;text-align:center;text-indent:0px;letter-spacing:0px;">0</div><div id="t52" style="position:absolute;left:1137.0px;top:538.13px;height:14px;line-height:14px;font-size:10px;font-weight:400;color:#6b7280;white-space:nowrap;letter-spacing:-0.075px;">Apr 5, 2025 5:57 PM</div><div id="t53" style="position:absolute;left:108.9px;top:570.30px;height:18px;line-height:18px;font-size:13px;font-weight:400;color:#374151;white-space:nowrap;letter-spacing:-0.040px;">Passenger Validation</div><div id="t54" style="position:absolute;left:236.7px;top:572.13px;height:14px;line-height:14px;font-size:10px;font-weight:400;color:#4b5563;white-space:nowrap;letter-spacing:0.075px;">from</div><div id="t55" style="position:absolute;left:260px;top:572.13px;height:14px;line-height:14px;font-size:10px;font-weight:700;color:#374151;white-space:nowrap;letter-spacing:-0.262px;">Passenger validation</div><div id="t56" style="position:absolute;left:362px;top:573.60px;height:14.4px;line-height:14.4px;font-size:10px;font-weight:400;color:#fff;white-space:nowrap;letter-spacing:0.000px;width:44.3px;text-align:center;text-indent:0.15px;letter-spacing:-0.15px;">manual</div><div id="t57" style="position:absolute;left:418.6px;top:572.13px;height:14px;line-height:14px;font-size:10px;font-weight:400;color:#6b7280;white-space:nowrap;letter-spacing:-0.081px;">6 tests</div><div id="t58" style="position:absolute;left:749.7px;top:573.45px;height:12.5px;line-height:12.5px;font-size:10px;font-weight:700;color:#047857;white-space:nowrap;letter-spacing:0.000px;width:31px;text-align:center;text-indent:0px;letter-spacing:0px;">6</div><div id="t59" style="position:absolute;left:783.8000000000001px;top:573.45px;height:12.5px;line-height:12.5px;font-size:10px;font-weight:400;color:#f6a9a9;white-space:nowrap;letter-spacing:0.000px;width:31px;text-align:center;text-indent:0px;letter-spacing:0px;">0</div><div id="t60" style="position:absolute;left:817.9000000000001px;top:573.45px;height:12.5px;line-height:12.5px;font-size:10px;font-weight:400;color:#f8c9a0;white-space:nowrap;letter-spacing:0.000px;width:31px;text-align:center;text-indent:0px;letter-spacing:0px;">0</div><div id="t61" style="position:absolute;left:1137.0px;top:572.34px;height:14px;line-height:14px;font-size:10px;font-weight:400;color:#6b7280;white-space:nowrap;letter-spacing:-0.075px;">Apr 5, 2025 5:55 PM</div><div id="t62" style="position:absolute;left:108.9px;top:604.60px;height:18px;line-height:18px;font-size:13px;font-weight:400;color:#374151;white-space:nowrap;letter-spacing:-0.119px;">Smoke run</div><div id="t63" style="position:absolute;left:177.5px;top:606.43px;height:14px;line-height:14px;font-size:10px;font-weight:400;color:#4b5563;white-space:nowrap;letter-spacing:0.075px;">from</div><div id="t64" style="position:absolute;left:200.7px;top:606.43px;height:14px;line-height:14px;font-size:10px;font-weight:700;color:#374151;white-space:nowrap;letter-spacing:-0.221px;">Smoke test Transfer Search</div><div id="t65" style="position:absolute;left:333.1px;top:607.90px;height:14.4px;line-height:14.4px;font-size:10px;font-weight:400;color:#fff;white-space:nowrap;letter-spacing:0.000px;width:44.3px;text-align:center;text-indent:0.15px;letter-spacing:-0.15px;">manual</div><div id="t66" style="position:absolute;left:411.2px;top:607.03px;height:14px;line-height:14px;font-size:10px;font-weight:400;color:#4b5563;white-space:nowrap;letter-spacing:-0.309px;">MacOS</div><div id="t67" style="position:absolute;left:480.5px;top:607.03px;height:14px;line-height:14px;font-size:10px;font-weight:400;color:#4b5563;white-space:nowrap;letter-spacing:-0.230px;">Chrome</div><div id="t68" style="position:absolute;left:551.8px;top:607.03px;height:14px;line-height:14px;font-size:10px;font-weight:400;color:#4b5563;white-space:nowrap;letter-spacing:-0.225px;">Windows</div><div id="t69" style="position:absolute;left:628.4px;top:607.03px;height:14px;line-height:14px;font-size:10px;font-weight:400;color:#4b5563;white-space:nowrap;letter-spacing:-0.152px;">Firefox</div><div id="t70" style="position:absolute;left:671px;top:606.43px;height:14px;line-height:14px;font-size:10px;font-weight:400;color:#6b7280;white-space:nowrap;letter-spacing:-0.004px;">22 tests</div><div id="t71" style="position:absolute;left:749.7px;top:607.75px;height:12.5px;line-height:12.5px;font-size:10px;font-weight:700;color:#047857;white-space:nowrap;letter-spacing:0.000px;width:31px;text-align:center;text-indent:0px;letter-spacing:0px;">16</div><div id="t72" style="position:absolute;left:783.8000000000001px;top:607.75px;height:12.5px;line-height:12.5px;font-size:10px;font-weight:700;color:#dc2626;white-space:nowrap;letter-spacing:0.000px;width:31px;text-align:center;text-indent:0px;letter-spacing:0px;">4</div><div id="t73" style="position:absolute;left:817.9000000000001px;top:607.75px;height:12.5px;line-height:12.5px;font-size:10px;font-weight:700;color:#e8850b;white-space:nowrap;letter-spacing:0.000px;width:31px;text-align:center;text-indent:0px;letter-spacing:0px;">2</div><div id="t74" style="position:absolute;left:1136.0px;top:606.63px;height:14px;line-height:14px;font-size:10px;font-weight:400;color:#6b7280;white-space:nowrap;letter-spacing:-0.023px;">Apr 5, 2025 5:49 PM</div><div id="t75" style="position:absolute;left:131.7px;top:638.80px;height:18px;line-height:18px;font-size:13px;font-weight:400;color:#374151;white-space:nowrap;letter-spacing:-0.085px;">Release: Transfer Search Feature</div><div id="t76" style="position:absolute;left:337.6px;top:640.63px;height:14px;line-height:14px;font-size:10px;font-weight:400;color:#6b7280;white-space:nowrap;letter-spacing:-0.354px;">17 tests</div><div id="t77" style="position:absolute;left:377px;top:640.63px;height:14px;line-height:14px;font-size:10px;font-weight:400;color:#6b7280;white-space:nowrap;letter-spacing:-0.083px;">5 runs</div><div id="t78" style="position:absolute;left:1136.5px;top:640.84px;height:14px;line-height:14px;font-size:10px;font-weight:400;color:#6b7280;white-space:nowrap;letter-spacing:-0.049px;">Apr 5, 2025 5:24 PM</div><div id="t79" style="position:absolute;left:108.9px;top:673.10px;height:18px;line-height:18px;font-size:13px;font-weight:400;color:#374151;white-space:nowrap;letter-spacing:0.045px;">Manual tests at 30 Mar 2025 14:48</div><div id="t80" style="position:absolute;left:318px;top:674.93px;height:14px;line-height:14px;font-size:10px;font-weight:400;color:#4b5563;white-space:nowrap;letter-spacing:0.075px;">from</div><div id="t81" style="position:absolute;left:341.3px;top:674.93px;height:14px;line-height:14px;font-size:10px;font-weight:700;color:#374151;white-space:nowrap;letter-spacing:-0.253px;">Passenger test run</div><div id="t82" style="position:absolute;left:433.4px;top:676.40px;height:14.4px;line-height:14.4px;font-size:10px;font-weight:400;color:#fff;white-space:nowrap;letter-spacing:0.000px;width:44.3px;text-align:center;text-indent:0.15px;letter-spacing:-0.15px;">manual</div><div id="t83" style="position:absolute;left:512.1px;top:675.53px;height:14px;line-height:14px;font-size:10px;font-weight:400;color:#4b5563;white-space:nowrap;letter-spacing:-0.309px;">MacOS</div><div id="t84" style="position:absolute;left:580.5px;top:675.53px;height:14px;line-height:14px;font-size:10px;font-weight:400;color:#4b5563;white-space:nowrap;letter-spacing:-0.225px;">Windows</div><div id="t85" style="position:absolute;left:633.4px;top:674.93px;height:14px;line-height:14px;font-size:10px;font-weight:400;color:#6b7280;white-space:nowrap;letter-spacing:0.033px;">6 tests</div><div id="t86" style="position:absolute;left:749.7px;top:676.25px;height:12.5px;line-height:12.5px;font-size:10px;font-weight:700;color:#047857;white-space:nowrap;letter-spacing:0.000px;width:31px;text-align:center;text-indent:0px;letter-spacing:0px;">4</div><div id="t87" style="position:absolute;left:783.8000000000001px;top:676.25px;height:12.5px;line-height:12.5px;font-size:10px;font-weight:700;color:#dc2626;white-space:nowrap;letter-spacing:0.000px;width:31px;text-align:center;text-indent:0px;letter-spacing:0px;">1</div><div id="t88" style="position:absolute;left:817.9000000000001px;top:676.25px;height:12.5px;line-height:12.5px;font-size:10px;font-weight:700;color:#e8850b;white-space:nowrap;letter-spacing:0.000px;width:31px;text-align:center;text-indent:0px;letter-spacing:0px;">1</div><div id="t89" style="position:absolute;left:1128.7px;top:675.13px;height:14px;line-height:14px;font-size:10px;font-weight:400;color:#6b7280;white-space:nowrap;letter-spacing:-0.018px;">Mar 30, 2025 2:48 PM</div><div id="t90" style="position:absolute;left:81.2px;top:22.80px;height:23px;line-height:23px;font-size:16.5px;font-weight:700;color:#4b5563;white-space:nowrap;letter-spacing:-0.453px;">Transfer Search 1</div><div id="t91" style="position:absolute;left:218.5px;top:22.80px;height:23px;line-height:23px;font-size:16.5px;font-weight:400;color:#4b5563;white-space:nowrap;letter-spacing:0.000px;">/</div><div id="t92" style="position:absolute;left:230.5px;top:22.80px;height:23px;line-height:23px;font-size:16.5px;font-weight:700;color:#111827;white-space:nowrap;letter-spacing:-0.938px;">Runs</div><div id="t93" style="position:absolute;left:361.3px;top:26.60px;height:16px;line-height:16px;font-size:11.5px;font-weight:400;color:#6b7280;white-space:nowrap;letter-spacing:0.038px;">Search [Cmd + K]</div><div id="t94" style="position:absolute;left:823px;top:25.60px;height:18px;line-height:18px;font-size:13px;font-weight:400;color:#ffffff;white-space:nowrap;letter-spacing:0.058px;">Report Automated Tests</div><div id="t95" style="position:absolute;left:1016.3px;top:25.60px;height:18px;line-height:18px;font-size:13px;font-weight:400;color:#111827;white-space:nowrap;letter-spacing:-0.171px;">Manual Run</div><div id="t96" style="position:absolute;left:1137.8px;top:25.60px;height:18px;line-height:18px;font-size:13px;font-weight:400;color:#111827;white-space:nowrap;letter-spacing:-0.061px;">New Group</div><div id="t97" style="position:absolute;left:124.3px;top:84.40px;height:16px;line-height:16px;font-size:11.5px;font-weight:400;color:#4b5563;white-space:nowrap;letter-spacing:-0.003px;">Manual</div><div id="t98" style="position:absolute;left:193px;top:84.40px;height:16px;line-height:16px;font-size:11.5px;font-weight:400;color:#4b5563;white-space:nowrap;letter-spacing:0.186px;">Automated</div><div id="t99" style="position:absolute;left:282px;top:84.40px;height:16px;line-height:16px;font-size:11.5px;font-weight:400;color:#4b5563;white-space:nowrap;letter-spacing:0.062px;">Mixed</div><div id="t100" style="position:absolute;left:344.5px;top:84.40px;height:16px;line-height:16px;font-size:11.5px;font-weight:400;color:#4b5563;white-space:nowrap;letter-spacing:0.146px;">Unfinished</div><div id="t101" style="position:absolute;left:431.8px;top:84.40px;height:16px;line-height:16px;font-size:11.5px;font-weight:400;color:#4b5563;white-space:nowrap;letter-spacing:-0.036px;">Groups</div><div id="t102" style="position:absolute;left:500.6px;top:84.30px;height:16px;line-height:16px;font-size:11.5px;font-weight:400;color:#5b7d99;white-space:nowrap;letter-spacing:0.000px;width:76px;text-align:center;">Automatable</div><div id="t103" style="position:absolute;left:595px;top:84.30px;height:16px;line-height:16px;font-size:11.5px;font-weight:400;color:#5f7f55;white-space:nowrap;letter-spacing:0.000px;width:37.5px;text-align:center;">Type</div><div id="t104" style="position:absolute;left:651px;top:84.30px;height:16px;line-height:16px;font-size:11.5px;font-weight:400;color:#8d6256;white-space:nowrap;letter-spacing:0.000px;width:63.5px;text-align:center;">To Review</div><div id="t105" style="position:absolute;left:733px;top:84.30px;height:16px;line-height:16px;font-size:11.5px;font-weight:400;color:#5b4690;white-space:nowrap;letter-spacing:0.000px;width:71.5px;text-align:center;">Localization</div><div id="t106" style="position:absolute;left:1171.5px;top:327.10px;height:15px;line-height:15px;font-size:10.5px;font-weight:400;color:#1f2937;white-space:nowrap;letter-spacing:-0.328px;">Custom view</div>

<div style="position:absolute;left:0;top:0;width:62px;height:720px;background:#3730a3"></div>
<svg style="position:absolute;left:0;top:0" width="62" height="720" viewBox="0 0 62 720">
 <g fill="#fff"><rect x="20.5" y="25.5" width="19" height="3" rx="1.5"/><rect x="20.5" y="31.5" width="19" height="3" rx="1.5"/><rect x="20.5" y="37.5" width="19" height="3" rx="1.5"/></g>
 <path d="M21.5 83.5 L26.8 88.5 L38.5 76.8" fill="none" stroke="#a5b4fc" stroke-width="3.4" stroke-linecap="butt" stroke-linejoin="miter"/>
 <circle cx="30" cy="126" r="8.4" fill="none" stroke="#fff" stroke-width="2"/>
 <path d="M27.6 121.8 L33.6 126 L27.6 130.2 Z" fill="#fff"/>
 <g fill="#a5b4fc"><rect x="20" y="163.9" width="12" height="2"/><rect x="20" y="167.9" width="12" height="2"/><rect x="20" y="171.7" width="8" height="2"/></g>
 <path d="M30.3 172.4 L33.6 175.7 L39.9 169.4" fill="none" stroke="#a5b4fc" stroke-width="2" stroke-linecap="butt" stroke-linejoin="miter"/>
 <path d="M21 221 V217.8 H25 V213.9 H29 V210 H33 V206.2 H39.8 V209.3 H36 V213.1 H32 V217 H28 V221 Z" fill="#a5b4fc"/>
 <path d="M21.1 258.6 H24.2 L27.9 251.2 L28.4 261.8 L32.4 255.6 L35.3 258.6 H38.7" fill="none" stroke="#a5b4fc" stroke-width="2" stroke-linejoin="round" stroke-linecap="butt"/>
 <rect x="20.1" y="291.7" width="19.6" height="17.4" rx="1.4" fill="none" stroke="#a5b4fc" stroke-width="2"/>
 <rect x="19.1" y="290.7" width="21.6" height="4.3" rx="1.2" fill="#a5b4fc"/>
 <rect x="18.3" y="298.5" width="3.6" height="5.7" fill="#3730a3"/>
 <path d="M19.1 301.3 H31.4 M27.6 297.4 L31.5 301.3 L27.6 305.2" fill="none" stroke="#a5b4fc" stroke-width="2" stroke-linejoin="miter"/>
 <rect x="22.1" y="336" width="15.6" height="15.8" rx="1.3" fill="none" stroke="#a5b4fc" stroke-width="2"/>
 <g fill="#a5b4fc"><rect x="24.9" y="341.9" width="2.2" height="7.1"/><rect x="28.9" y="339" width="2.2" height="10"/><rect x="32.7" y="344.8" width="2.2" height="4.2"/></g>
 <g fill="none" stroke="#a5b4fc" stroke-width="1.9"><circle cx="24" cy="380.6" r="2.1"/><circle cx="35.6" cy="380.6" r="2.1"/><circle cx="29.8" cy="394.2" r="2.1"/><path d="M24 382.7 V383.6 L29.8 391.2 L35.6 383.6 V382.7"/></g>
 <path fill-rule="evenodd" d="M27.59,424.04 L27.79,421.37 L32.41,421.37 L32.61,424.04 L34.88,425.35 L37.28,424.19 L39.59,428.19 L37.38,429.69 L37.38,432.31 L39.59,433.81 L37.28,437.81 L34.88,436.65 L32.61,437.96 L32.41,440.63 L27.79,440.63 L27.59,437.96 L25.32,436.65 L22.92,437.81 L20.61,433.81 L22.82,432.31 L22.82,429.69 L20.61,428.19 L22.92,424.19 L25.32,425.35 Z M33.50,431.00 A3.4,3.4 0 1 0 26.70,431.00 A3.4,3.4 0 1 0 33.50,431.00 Z" fill="#a5b4fc" stroke="#a5b4fc" stroke-width="0.6" stroke-linejoin="round"/>
 <circle cx="29.9" cy="599" r="9" fill="none" stroke="#a5b4fc" stroke-width="1.8"/>
 <path d="M26.9 596.6 Q26.9 593.6 29.9 593.6 Q32.9 593.6 32.9 596.3 Q32.9 598.2 29.9 599.3 V601" fill="none" stroke="#a5b4fc" stroke-width="1.8" stroke-linecap="round"/>
 <circle cx="29.9" cy="603.8" r="1.1" fill="#a5b4fc"/>
 <path d="M22.6 634.5 Q22.6 632.8 24.3 632.8 H27.8 L29.8 634.9 H40.3 Q42 634.9 42 636.6 V646.8 Q42 648.5 40.3 648.5 H24.3 Q22.6 648.5 22.6 646.8 Z" fill="#a5b4fc"/>
 <path d="M18.9 637.5 V650.2 Q18.9 651.6 20.3 651.6 H38.2" fill="none" stroke="#a5b4fc" stroke-width="1.6"/>
 <g transform="translate(30.9 686.2)"><circle cx="0" cy="0" r="11.55" fill="#fff" stroke="#111" stroke-width="1.3"/><path d="M-7.1,-7.1 H2 V8.5 H-1.6 V-3.2 H-7.1 Z" fill="#111"/><rect x="3" y="-7.1" width="1.35" height="7.7" fill="#5b8dfa"/><rect x="5.1" y="-7.1" width="1.7" height="4.4" fill="#222"/></g>
</svg>

<div style="position:absolute;left:0;top:714px;width:6px;height:6px;background:#1a1a2e"></div><div style="position:absolute;left:0;top:710px;width:10px;height:10px;border-bottom-left-radius:7px;background:#3730a3"></div>
</body></html>
